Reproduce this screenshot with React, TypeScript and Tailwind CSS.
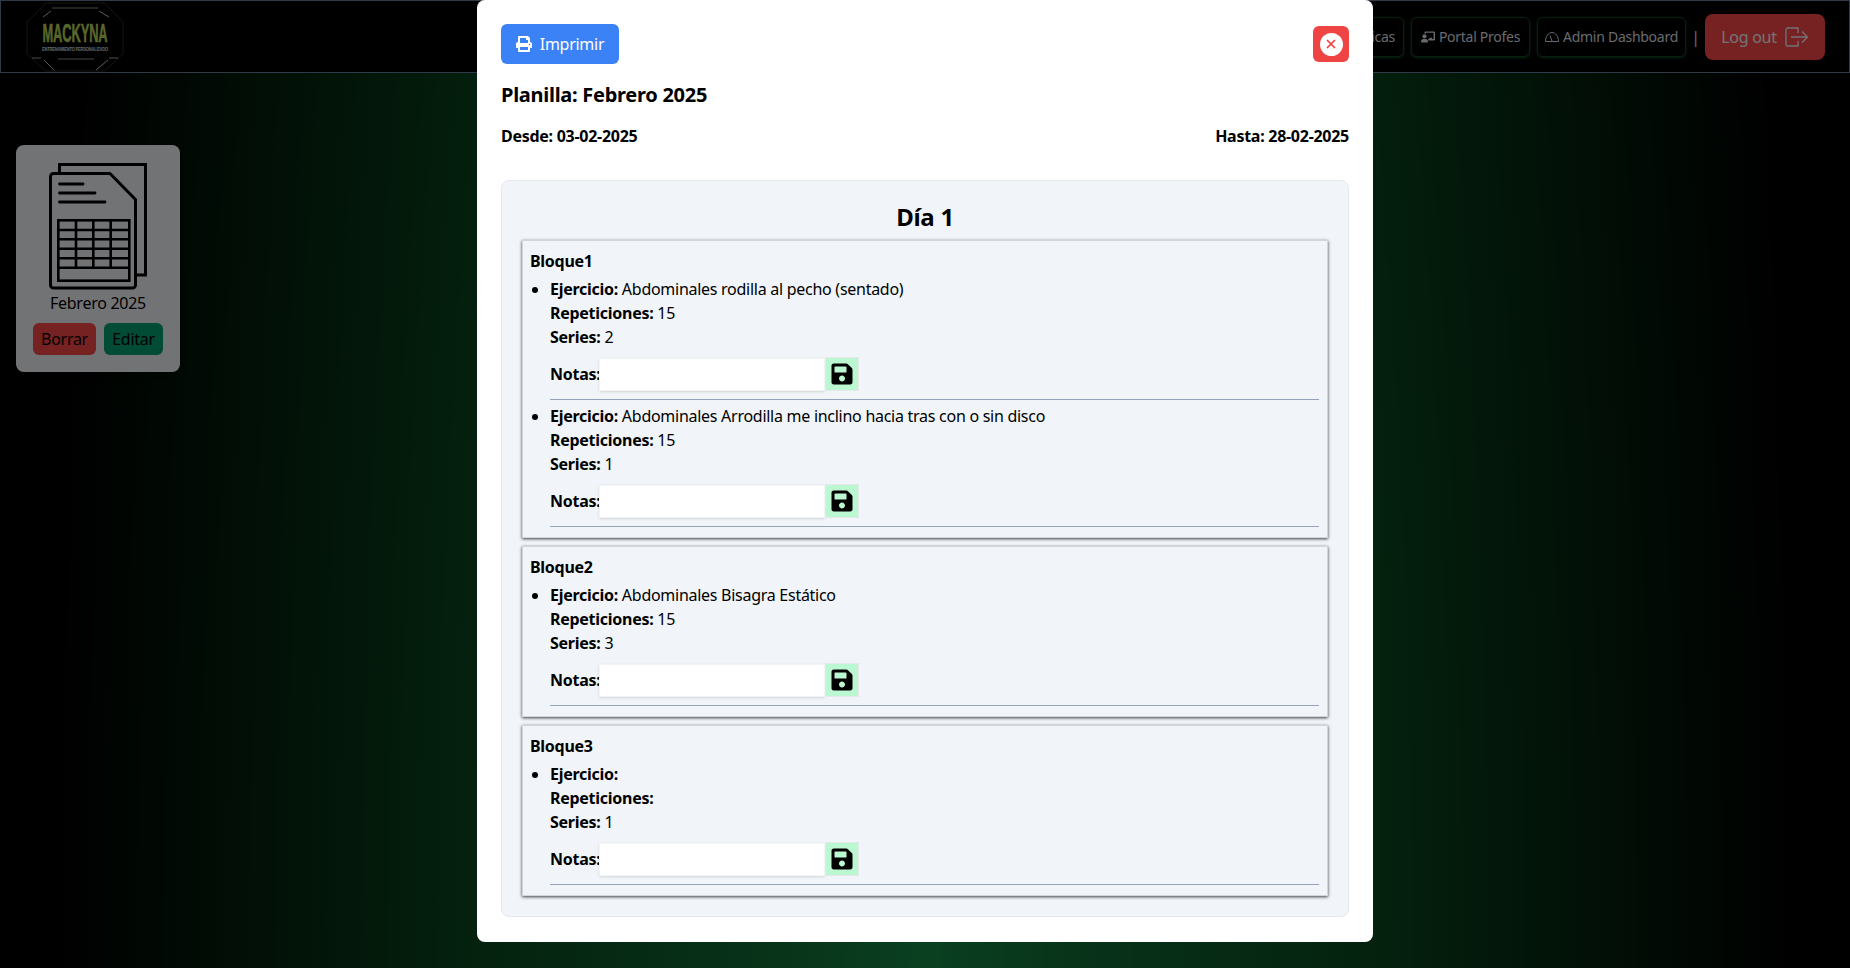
import React from 'react';
import { FaChalkboardTeacher, FaPrint, FaSave } from 'react-icons/fa';
import { X } from 'lucide-react';

type Ejercicio = { nombre: string; repeticiones: string; series: string };

const bloques: { titulo: string; ejercicios: Ejercicio[] }[] = [
  {
    titulo: 'Bloque1',
    ejercicios: [
      { nombre: 'Abdominales rodilla al pecho (sentado)', repeticiones: '15', series: '2' },
      { nombre: 'Abdominales Arrodilla me inclino hacia tras con o sin disco', repeticiones: '15', series: '1' },
    ],
  },
  {
    titulo: 'Bloque2',
    ejercicios: [{ nombre: 'Abdominales Bisagra Estático', repeticiones: '15', series: '3' }],
  },
  {
    titulo: 'Bloque3',
    ejercicios: [{ nombre: '', repeticiones: '', series: '1' }],
  },
];

const PlanillaIcon = () => (
  <svg width="100" height="129" viewBox="48 162 100 129" fill="none" stroke="black">
    <path d="M59.500 172V164.500H145.500V275H137" strokeWidth="3" />
    <path d="M53.500 173.500H110L135.500 199.500V285a3 3 0 0 1-3 3H53.500a3 3 0 0 1-3-3V176.500a3 3 0 0 1 3-3Z" strokeWidth="3" strokeLinejoin="round" />
    <path d="M59.500 184H83M59.500 193H95M59.500 202H105" strokeWidth="2.800" strokeLinecap="round" />
    <rect x="58.300" y="220.300" width="71" height="60.400" strokeWidth="2.600" />
    <path d="M76 220v47.500M93.300 220v47.500M110.700 220v47.500M58 230h71M58 239.300h71M58 248.700h71M58 258.300h71M58 267.700h71" strokeWidth="2.600" />
  </svg>
);

const Logo = () => (
  <svg width="98" height="70" viewBox="0 0 98 70" fill="none" className="block overflow-visible">
    <path d="M20 1H78L97 20V52L78 69H20L1 52V20Z" stroke="#2a2a26" strokeWidth="1" />
    <path d="M26 6H72M32 57H68" stroke="#8a8a8a" strokeWidth="1" />
    <path d="M25 9L17 15M73 9L83 15M18 58L28 68M82 58L70 68" stroke="#b5b5b5" strokeWidth="1" />
    <path d="M6 56H15M83 56H92" stroke="#999999" strokeWidth="1" />
    <text x="49" y="40" textAnchor="middle" textLength="65" lengthAdjust="spacingAndGlyphs" fontFamily="'Liberation Sans', sans-serif" fontWeight="700" fontSize="26" fill="#b4cc55" stroke="#b4cc55" strokeWidth="0.500">MACKYNA</text>
    <text x="49" y="49" textAnchor="middle" textLength="66" lengthAdjust="spacingAndGlyphs" fontFamily="'Liberation Sans', sans-serif" fontWeight="700" fontSize="5.500" fill="#d0d0d0">ENTRENAMIENTO PERSONALIZADO</text>
  </svg>
);

const GaugeIcon = () => (
  <svg width="14" height="10" viewBox="0 0 14 10" fill="none" stroke="currentColor" strokeWidth="1">
    <path d="M0.500 9.500C0.500 4.500 3.500 0.500 7 0.500S13.500 4.500 13.500 9.500Z" />
    <path d="M7 9L5 3.500" />
  </svg>
);

const LogoutIcon = () => (
  <svg width="24" height="20" viewBox="0 0 24 20" fill="none" stroke="currentColor" strokeWidth="1.300">
    <path d="M13 6V1H2.500a1.500 1.500 0 0 0-1.500 1.500V17.500A1.500 1.500 0 0 0 2.500 19H13V14" />
    <path d="M6 10H22.500M17 4.500L22.500 10L17 15.500" />
  </svg>
);

const NavBoton = ({ className, children }: { className: string; children: React.ReactNode }) => (
  <button className={`h-10 flex items-center justify-center gap-1 rounded-md bg-black border border-[#14401f] text-sm text-gray-300 shadow-[0_1px_3px_rgba(34,197,94,0.35)] ${className}`}>
    {children}
  </button>
);

const App = () => {
  return (
    <div className="relative h-screen w-full overflow-hidden text-black tracking-[-0.017em] bg-[radial-gradient(ellipse_870px_4000px_at_50%_100%,#158042_0%,#0e5e2e_25%,#09461e_50%,#000000_100%)] font-['Noto_Sans',sans-serif]">
      {/* Navbar */}
      <header className="h-[73px] flex items-center justify-between bg-black border border-slate-500 pl-[25px] pr-6">
        <Logo />
        <nav className="flex items-center">
          <div className="flex items-center gap-[7px]">
            <NavBoton className="px-2">Estadísticas</NavBoton>
            <NavBoton className="w-[119px]"><FaChalkboardTeacher size={14} /> Portal Profes</NavBoton>
            <NavBoton className="w-[149px]"><GaugeIcon /> Admin Dashboard</NavBoton>
          </div>
          <span className="w-[19px] text-center text-gray-300">|</span>
          <button className="w-[120px] h-[46px] flex items-center justify-center gap-2 rounded-lg bg-[#ef4444] text-gray-200">
            Log out <LogoutIcon />
          </button>
        </nav>
      </header>

      {/* Planillas */}
      <main className="pt-[72px] pl-4">
        <div className="w-[164px] h-[227px] flex flex-col items-center pt-[17px] rounded-lg bg-[#e5e7eb] shadow-md">
          <PlanillaIcon />
          <span>Febrero 2025</span>
          <div className="flex gap-2 mt-2">
            <button className="w-[63px] h-8 rounded-md bg-[#ef4444]">Borrar</button>
            <button className="w-[59px] h-8 rounded-md bg-[#059669]">Editar</button>
          </div>
        </div>
      </main>

      {/* Modal planilla */}
      <div className="absolute inset-0 bg-black/50">
        <div className="w-[896px] h-[942px] mx-auto bg-white rounded-lg p-6">
          <div className="flex justify-between items-start">
            <button className="w-[118px] h-10 flex items-center justify-center gap-2 rounded-md bg-[#3b82f6] text-white">
              <FaPrint size={16} /> Imprimir
            </button>
            <button className="mt-[2px] w-9 h-9 flex items-center justify-center rounded-md bg-[#ef4444]">
              <span className="w-[23px] h-[23px] flex items-center justify-center rounded-full bg-white">
                <X size={14} strokeWidth={3} className="text-[#ef4444]" />
              </span>
            </button>
          </div>
          <h2 className="mt-[17px] text-xl font-bold leading-7">Planilla: Febrero 2025</h2>
          <div className="mt-[15px] flex justify-between font-bold">
            <span>Desde: 03-02-2025</span>
            <span>Hasta: 28-02-2025</span>
          </div>
          <section className="mt-8 h-[737px] px-5 pt-[20px] pb-5 bg-slate-100 border border-gray-200 rounded-lg">
            <h3 className="text-2xl font-bold text-center leading-8 mb-[7px]">Día 1</h3>
            <div className="flex flex-col gap-2">
              {bloques.map((bloque) => (
                <div key={bloque.titulo} className="pl-[7px] pr-2 pt-2 pb-[6px] bg-slate-100 border border-gray-300 shadow-[0_1px_3px_rgba(0,0,0,0.75)]">
                  <h4 className="font-bold">{bloque.titulo}</h4>
                  <ul className="list-disc pl-5 mt-1">
                    {bloque.ejercicios.map((ej, i) => (
                      <li key={i} className="mb-1">
                        <div><b>Ejercicio:</b> {ej.nombre}</div>
                        <div><b>Repeticiones:</b> {ej.repeticiones}</div>
                        <div><b>Series:</b> {ej.series}</div>
                        <div className="mt-2 flex items-center">
                          <b className="w-[49px]">Notas:</b>
                          <input className="w-[226px] h-[33px] bg-white border border-gray-100 shadow-sm outline-none" />
                          <button className="w-[34px] h-[34px] flex items-center justify-center bg-[#bbf7d0] border border-gray-200">
                            <FaSave size={24} />
                          </button>
                        </div>
                        <hr className="mt-2 border-[#94a3b8]" />
                      </li>
                    ))}
                  </ul>
                </div>
              ))}
            </div>
          </section>
        </div>
      </div>
    </div>
  );
};

export default App;
